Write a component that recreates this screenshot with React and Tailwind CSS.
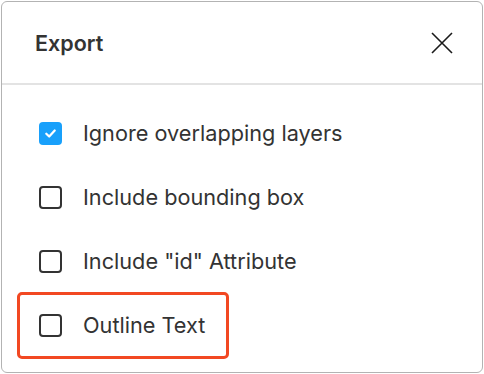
import React from "react";

const options = [
    { label: "Ignore overlapping layers", checked: true },
    { label: "Include bounding box", checked: false },
    { label: 'Include "id" Attribute', checked: false },
];

function Checkbox({ checked }) {
    if (checked) {
        return (
            <span className="flex h-[23px] w-[23px] shrink-0 items-center justify-center rounded-[4px] bg-[#18a0fb]">
                <svg width="15" height="15" viewBox="0 0 16 16" fill="none">
                    <path d="M3.5 8.2 L6.6 11.2 L12.5 4.8" stroke="#fff" strokeWidth="2.4" strokeLinecap="round" strokeLinejoin="round" />
                </svg>
            </span>
        );
    }
    return <span className="h-[23px] w-[23px] shrink-0 rounded-[4px] border-2 border-[#333]" />;
}

export default function App() {
    return (
        <div className="h-[374px] w-[484px] bg-white p-px font-['Inter',sans-serif] text-[#333]">
            <div className="flex h-[372px] w-[482px] flex-col rounded-[6px] border border-[#b3b3b3] bg-white">
                {/* header */}
                <div className="flex h-[81px] items-center justify-between pl-[33px] pr-[29px]">
                    <h1 className="pt-[2px] text-[21.5px] font-semibold">Export</h1>
                    <svg width="22" height="22" viewBox="0 0 22 22" fill="none">
                        <path d="M1 1 L21 21 M21 1 L1 21" stroke="#1a1a1a" strokeWidth="1.6" />
                    </svg>
                </div>
                <div className="h-[2px] bg-[#e3e3e3]" />

                {/* options */}
                <div className="flex flex-col px-[15px] pt-[16px]">
                    {options.map((opt) => (
                        <div key={opt.label} className="flex h-16 items-center gap-[21px] pl-[22px]">
                            <Checkbox checked={opt.checked} />
                            <span className="text-[21.7px]">{opt.label}</span>
                        </div>
                    ))}
                    <div className="-mt-px flex h-[67px] w-[212px] items-center gap-[21px] rounded-[5px] border-[3px] border-[#f24822] pl-[19px]">
                        <Checkbox checked={false} />
                        <span className="text-[21.7px]">Outline Text</span>
                    </div>
                </div>
            </div>
        </div>
    );
}
